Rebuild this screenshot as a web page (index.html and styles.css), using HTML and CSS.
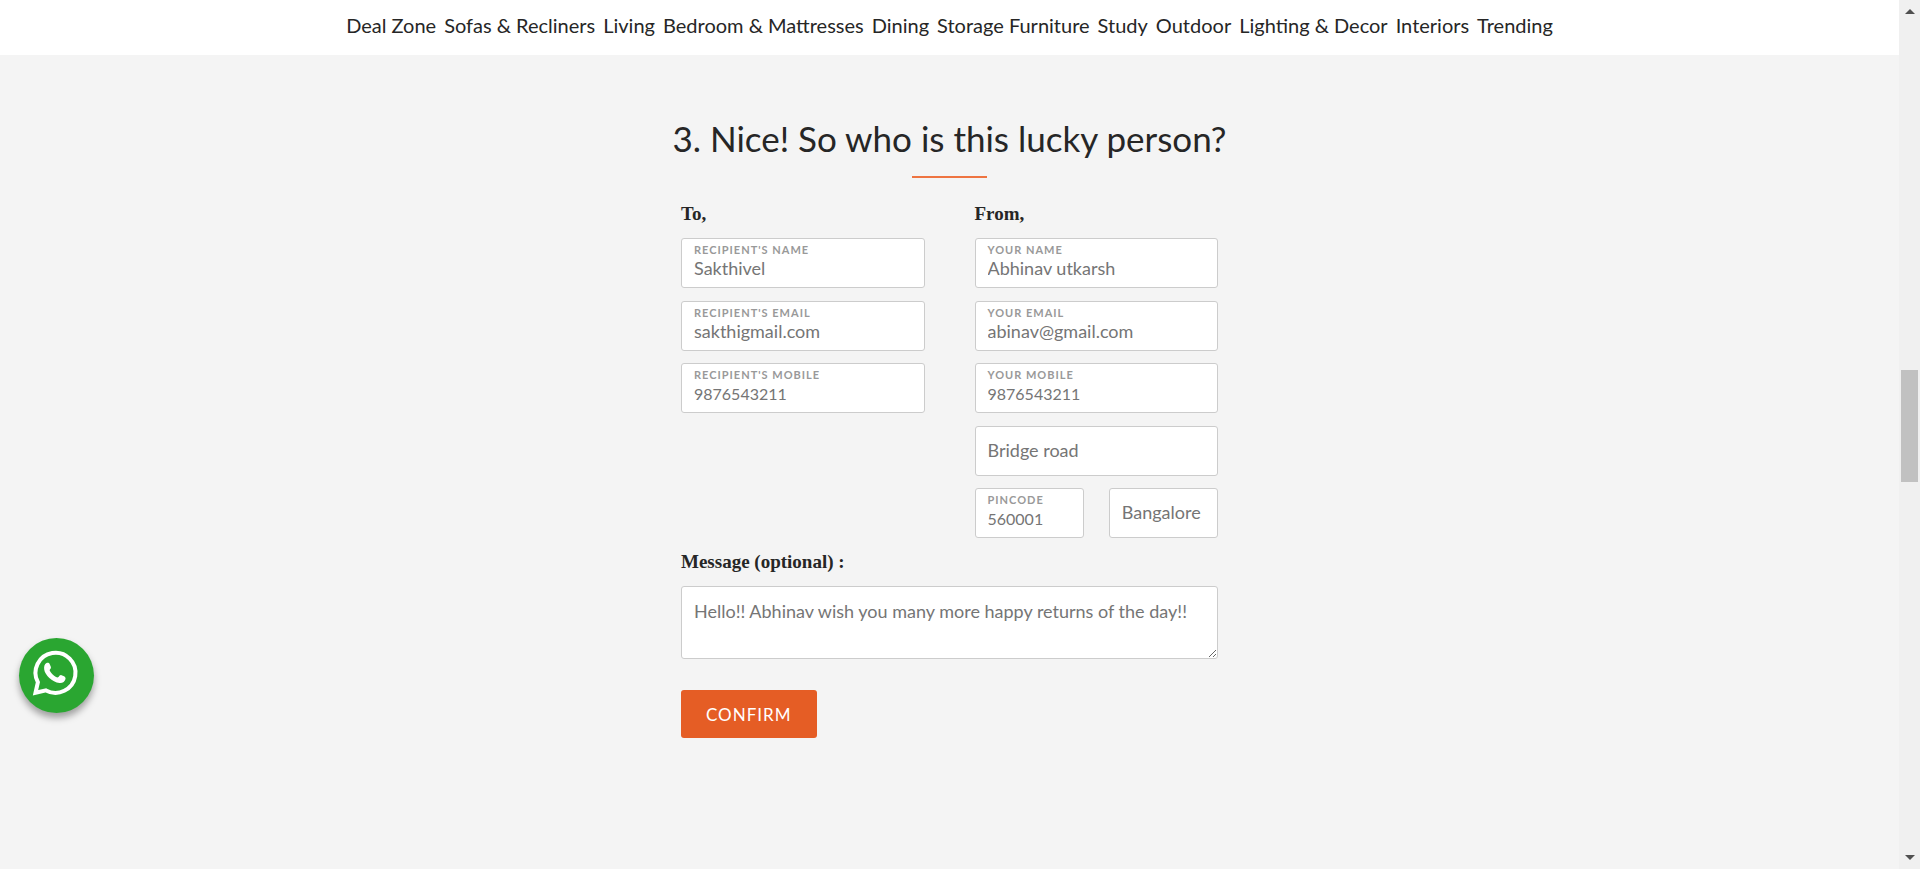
FILE: index.html
```html
<!DOCTYPE html>
<html lang="en">
<head>
<meta charset="utf-8">
<meta name="viewport" content="width=device-width, initial-scale=1">
<title>Gift card</title>
<link rel="stylesheet" href="styles.css">
</head>
<body>
<div class="page">
  <header class="topbar">
    <nav class="nav" aria-label="Categories">
      <a href="#">Deal Zone</a>
      <a href="#">Sofas &amp; Recliners</a>
      <a href="#">Living</a>
      <a href="#">Bedroom &amp; Mattresses</a>
      <a href="#">Dining</a>
      <a href="#">Storage Furniture</a>
      <a href="#">Study</a>
      <a href="#">Outdoor</a>
      <a href="#">Lighting &amp; Decor</a>
      <a href="#">Interiors</a>
      <a href="#">Trending</a>
    </nav>
  </header>
  <main class="main">
    <h1 class="title">3. Nice! So who is this lucky person?</h1>
    <form class="form">
      <div class="people">
        <section>
          <h2 class="heading">To,</h2>
          <div class="fields">
            <div class="field"><label for="rname">Recipient's name</label><input id="rname" type="text" value="Sakthivel"></div>
            <div class="field"><label for="remail">Recipient's email</label><input id="remail" type="text" value="sakthigmail.com"></div>
            <div class="field"><label for="rmobile">Recipient's mobile</label><input class="digits" id="rmobile" type="tel" value="9876543211"></div>
          </div>
        </section>
        <section>
          <h2 class="heading">From,</h2>
          <div class="fields">
            <div class="field"><label for="yname">Your name</label><input id="yname" type="text" value="Abhinav utkarsh"></div>
            <div class="field"><label for="yemail">Your email</label><input id="yemail" type="text" value="abinav@gmail.com"></div>
            <div class="field"><label for="ymobile">Your mobile</label><input class="digits" id="ymobile" type="tel" value="9876543211"></div>
            <div class="field"><input type="text" aria-label="Address" value="Bridge road"></div>
            <div class="pair">
              <div class="field"><label for="pin">Pincode</label><input class="digits" id="pin" type="text" value="560001"></div>
              <div class="field"><input type="text" aria-label="City" value="Bangalore"></div>
            </div>
          </div>
        </section>
      </div>
      <label class="heading message-label" for="message">Message (optional) :</label>
      <textarea class="message" id="message">Hello!! Abhinav wish you many more happy returns of the day!!</textarea>
      <button class="confirm" type="button">CONFIRM</button>
    </form>
  </main>
  <a class="chat" href="#" aria-label="Chat on WhatsApp">
    <svg viewBox="0 0 75 75" aria-hidden="true">
      <path d="M16.500 54.800 L18.900 44.300 A20 20 0 1 1 27 52.400 Z" fill="none" stroke="#fff" stroke-width="4"/>
      <path d="M27.500 25 C25.500 26 24.800 28.500 25.200 31.500 C26 37 33 44.300 40.500 45 C43.500 45.300 46 43.500 46.500 41 C46.800 39.500 46 38.800 44.500 38 L42.500 37.200 C41.200 36.700 40.500 37.700 39.500 39 C38.800 39.700 38 39.500 37 39 C34.500 37.800 32 35.200 30.800 32.800 C30.400 31.800 31.200 31.200 31.800 30.200 C32.200 29.500 31.800 28.800 31.500 28 L30.500 25.800 C30 24.600 28.800 24.500 27.500 25 Z" fill="#fff"/>
    </svg>
  </a>
</div>
<div class="scrollbar" aria-hidden="true">
  <svg class="arrow" viewBox="0 0 10 5"><path d="M0 5 5 0l5 5z"/></svg>
  <div class="track"><div class="thumb"></div></div>
  <svg class="arrow" viewBox="0 0 10 5"><path d="M0 0h10L5 5z"/></svg>
</div>
</body>
</html>
```
FILE: styles.css
```css
* {
  box-sizing: border-box;
}

body {
  display: flex;
  min-height: 100vh;
  margin: 0;
  background: #f4f4f4;
  color: #262626;
  font-family: Lato, "Liberation Sans", sans-serif;
}

.page {
  flex: 1;
  min-width: 0;
}

.topbar {
  padding: 11px 16px 16px;
  background: #fff;
}

.nav {
  display: flex;
  flex-wrap: wrap;
  justify-content: center;
  column-gap: 8px;
}

.nav a {
  color: inherit;
  font-size: 20px;
  line-height: 28px;
  text-decoration: none;
}

.main {
  padding: 60px 16px;
}

.title {
  margin: 0;
  font-size: 35px;
  font-weight: 400;
  line-height: 46px;
  text-align: center;
}

.title::after {
  display: block;
  width: 75px;
  height: 2px;
  margin: 15px auto 0;
  background: #ee7441;
  content: "";
}

.form {
  max-width: 537px;
  margin: 24px auto 0;
}

.people {
  display: grid;
  grid-template-columns: 1fr 1fr;
  column-gap: 50px;
}

.heading {
  display: block;
  margin: 0;
  font-family: "Liberation Serif", serif;
  font-size: 19px;
  font-weight: 700;
  line-height: 24px;
}

.fields {
  display: grid;
  grid-template-rows: repeat(5, 50px);
  align-content: space-between;
  min-height: 300px;
  margin-top: 12px;
}

.field {
  display: flex;
  flex-direction: column;
  justify-content: center;
  min-width: 0;
  height: 50px;
  padding: 0 12px 2px;
  border: 1px solid #ccc;
  border-radius: 3px;
  background: #fff;
}

.field label {
  color: #999;
  font-size: 11px;
  font-weight: 700;
  letter-spacing: 1px;
  line-height: 12px;
  text-transform: uppercase;
}

.field input {
  width: 100%;
  height: 24px;
  padding: 0;
  border: 0;
  outline: 0;
  background: none;
  color: #757575;
  font: inherit;
  font-size: 18px;
}

.field .digits {
  font-size: 16px;
}

.pair {
  display: grid;
  grid-template-columns: 1fr 1fr;
  column-gap: 25px;
}

.message-label {
  margin-top: 12px;
}

.message {
  display: block;
  width: 100%;
  height: 73px;
  margin-top: 12px;
  padding: 12px;
  border: 1px solid #ccc;
  border-radius: 3px;
  outline: 0;
  background: #fff;
  color: #757575;
  font: inherit;
  font-size: 18px;
  line-height: 24px;
}

.confirm {
  height: 48px;
  margin-top: 31px;
  padding: 0 25px;
  border: 0;
  border-radius: 3px;
  background: #e55d25;
  color: #fff;
  font: inherit;
  font-size: 17px;
  letter-spacing: 1px;
}

.chat {
  position: fixed;
  bottom: 156px;
  left: 19px;
  width: 75px;
  height: 75px;
  border-radius: 50%;
  background: #2aa631;
  box-shadow: 0 5px 7px rgba(0, 0, 0, 0.35);
}

.chat svg {
  display: block;
}

.scrollbar {
  position: sticky;
  top: 0;
  display: flex;
  flex-direction: column;
  align-items: center;
  width: 21px;
  height: 100vh;
  padding: 9px 2px;
  background: #f0f0f0;
}

.arrow {
  width: 10px;
  height: 5px;
  fill: #505050;
}

.track {
  flex: 1;
  width: 17px;
  padding-top: 356px;
}

.thumb {
  height: 112px;
  background: #c1c1c1;
}
```
